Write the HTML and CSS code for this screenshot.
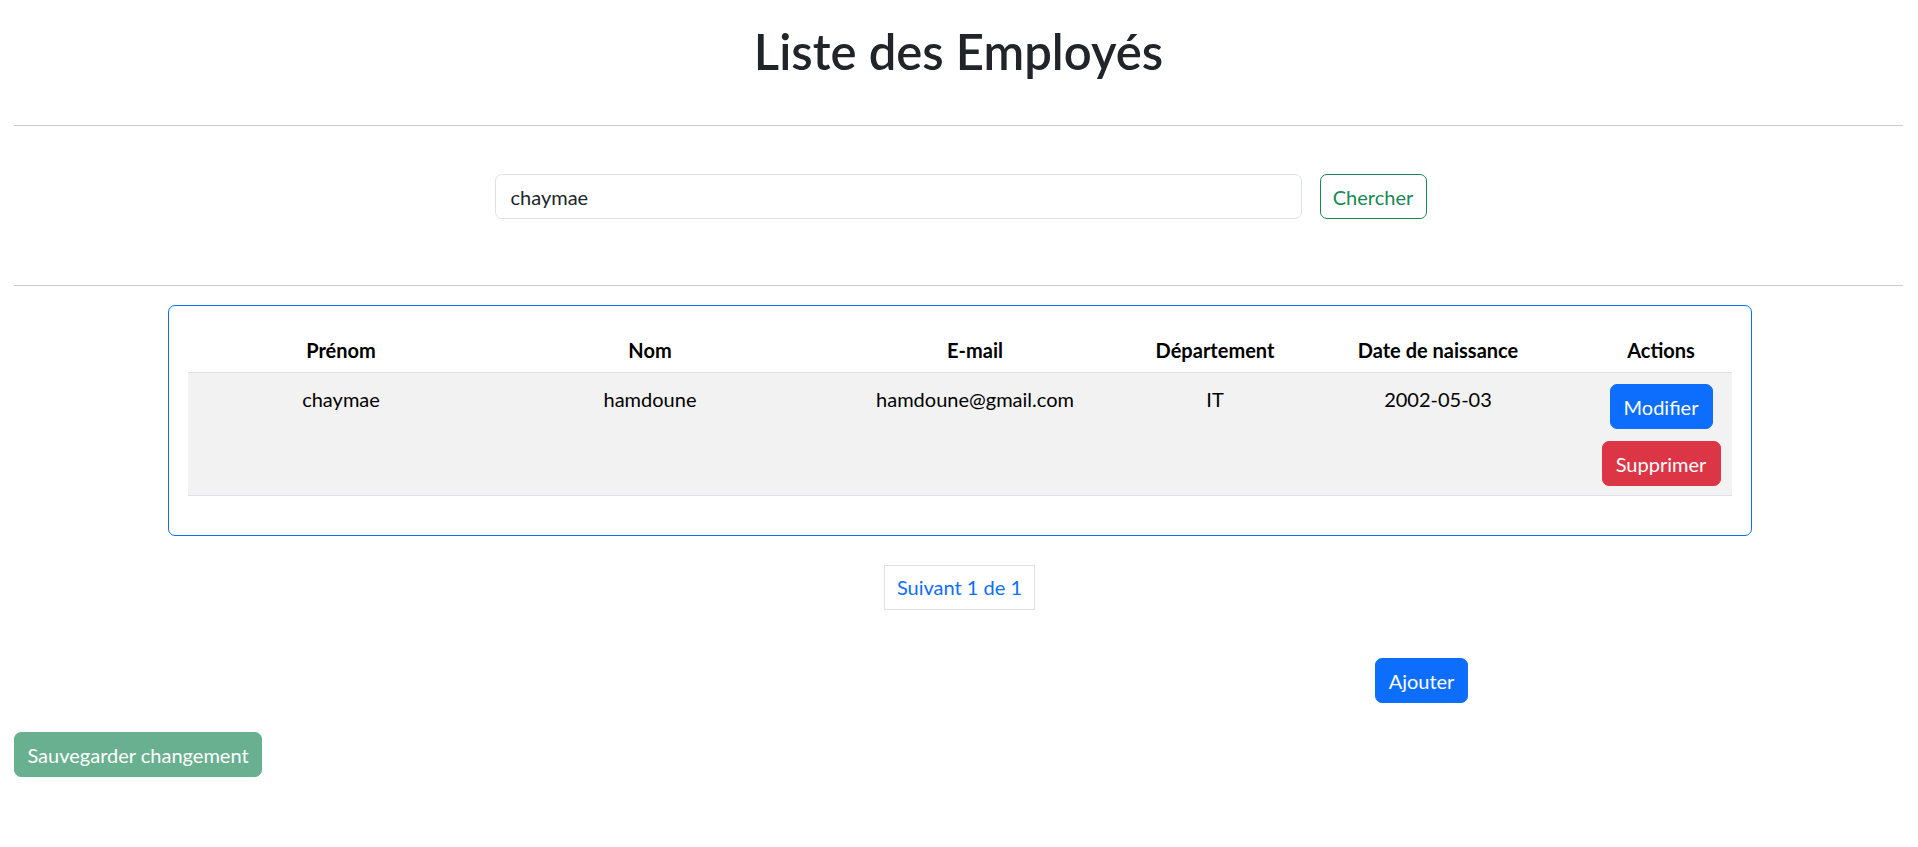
FILE: index.html
```html
<!DOCTYPE html>
<html lang="fr">
<head>
<meta charset="utf-8">
<title>Liste des Employés</title>
<link rel="stylesheet" href="styles.css">
</head>
<body>
<div class="page">
  <h1 class="title">Liste des Employés</h1>
  <hr class="rule rule-top">
  <form class="search">
    <input class="search-input" type="text" value="chaymae">
    <button type="button" class="btn btn-outline-success">Chercher</button>
  </form>
  <hr class="rule rule-mid">
  <div class="card">
    <table class="table">
      <colgroup>
        <col class="c1"><col class="c2"><col class="c3"><col class="c4"><col class="c5"><col class="c6">
      </colgroup>
      <thead>
        <tr>
          <th>Prénom</th>
          <th>Nom</th>
          <th>E-mail</th>
          <th>Département</th>
          <th>Date de naissance</th>
          <th>Actions</th>
        </tr>
      </thead>
      <tbody>
        <tr class="striped">
          <td>chaymae</td>
          <td>hamdoune</td>
          <td>hamdoune@gmail.com</td>
          <td>IT</td>
          <td>2002-05-03</td>
          <td>
            <div class="actions">
              <button type="button" class="btn btn-primary">Modifier</button>
              <button type="button" class="btn btn-danger">Supprimer</button>
            </div>
          </td>
        </tr>
      </tbody>
    </table>
  </div>
  <div class="pager">
    <span class="page-link">Suivant 1 de 1</span>
  </div>
  <div class="add-row">
    <button type="button" class="btn btn-primary">Ajouter</button>
  </div>
  <div class="save-row">
    <button type="button" class="btn btn-success" disabled>Sauvegarder changement</button>
  </div>
</div>
</body>
</html>
```
FILE: styles.css
```css
* { box-sizing: border-box; }

html, body {
  margin: 0;
  padding: 0;
  background: #fff;
}

body {
  font-family: Lato, "Open Sans", "Liberation Sans", sans-serif;
  font-size: 20px;
  line-height: 30px;
  color: #212529;
}

.page {
  padding: 0 15px 60px 14px;
}

.title {
  margin: 0;
  padding-top: 21px;
  font-size: 49px;
  line-height: 60px;
  font-weight: 600;
  text-align: center;
  color: #212529;
}

.rule {
  border: 0;
  border-top: 1px solid #c8c9ca;
  margin: 0;
}

.rule-top { margin-top: 44px; }

.search {
  display: flex;
  justify-content: center;
  gap: 18px;
  margin: 48px 0 0 0;
  padding-left: 4px;
}

.search-input {
  width: 807px;
  height: 45px;
  padding: 7px 15px;
  font: inherit;
  color: #212529;
  border: 1px solid #dee2e6;
  border-radius: 7px;
  background: #fff;
  outline: none;
}

.btn {
  font: inherit;
  height: 45px;
  padding: 0 15px;
  border-radius: 7px;
  border: 1px solid transparent;
  line-height: 30px;
  cursor: pointer;
}

.btn-outline-success {
  width: 107px;
  color: #198754;
  background: #fff;
  border-color: #198754;
  padding: 0;
}

.btn-primary {
  color: #fff;
  background: #0d6efd;
  border-color: #0d6efd;
}

.btn-danger {
  color: #fff;
  background: #dc3545;
  border-color: #dc3545;
}

.btn-success {
  color: #fff;
  background: #198754;
  border-color: #198754;
}

.btn-success:disabled {
  opacity: 0.65;
  cursor: default;
}

.rule-mid { margin-top: 66px; }

.card {
  margin: 19px 151px 0 154px;
  border: 1px solid #0d6efd;
  border-radius: 7px;
  padding: 20px 19px 39px 19px;
}

.table {
  width: 100%;
  border-collapse: collapse;
  table-layout: fixed;
  color: #000;
}

.c1 { width: 306px; }
.c2 { width: 312px; }
.c3 { width: 338px; }
.c4 { width: 142px; }
.c5 { width: 304px; }
.c6 { width: 142px; }

.table th,
.table td {
  text-align: center;
  vertical-align: top;
  border-bottom: 1px solid #dee2e6;
}

.table th {
  font-weight: 700;
  padding: 9px 0 7px 0;
  white-space: nowrap;
}

.striped td {
  background: #f2f2f2;
}

.table td {
  padding: 11px 0 9px 0;
}

.actions {
  display: flex;
  flex-direction: column;
  align-items: center;
  gap: 12px;
}

.actions .btn-primary { width: 103px; padding: 0; }
.actions .btn-danger { width: 119px; padding: 0; }

.pager {
  display: flex;
  justify-content: center;
  margin-top: 29px;
  padding-left: 2px;
}

.page-link {
  display: inline-block;
  width: 151px;
  height: 45px;
  line-height: 43px;
  text-align: center;
  color: #0d6efd;
  border: 1px solid #dee2e6;
  background: #fff;
}

.add-row {
  display: flex;
  justify-content: flex-end;
  margin-top: 48px;
  width: 1454px;
}

.add-row .btn { width: 93px; padding: 0; }

.save-row {
  margin-top: 29px;
}

.save-row .btn { width: 248px; padding: 0; }
```
